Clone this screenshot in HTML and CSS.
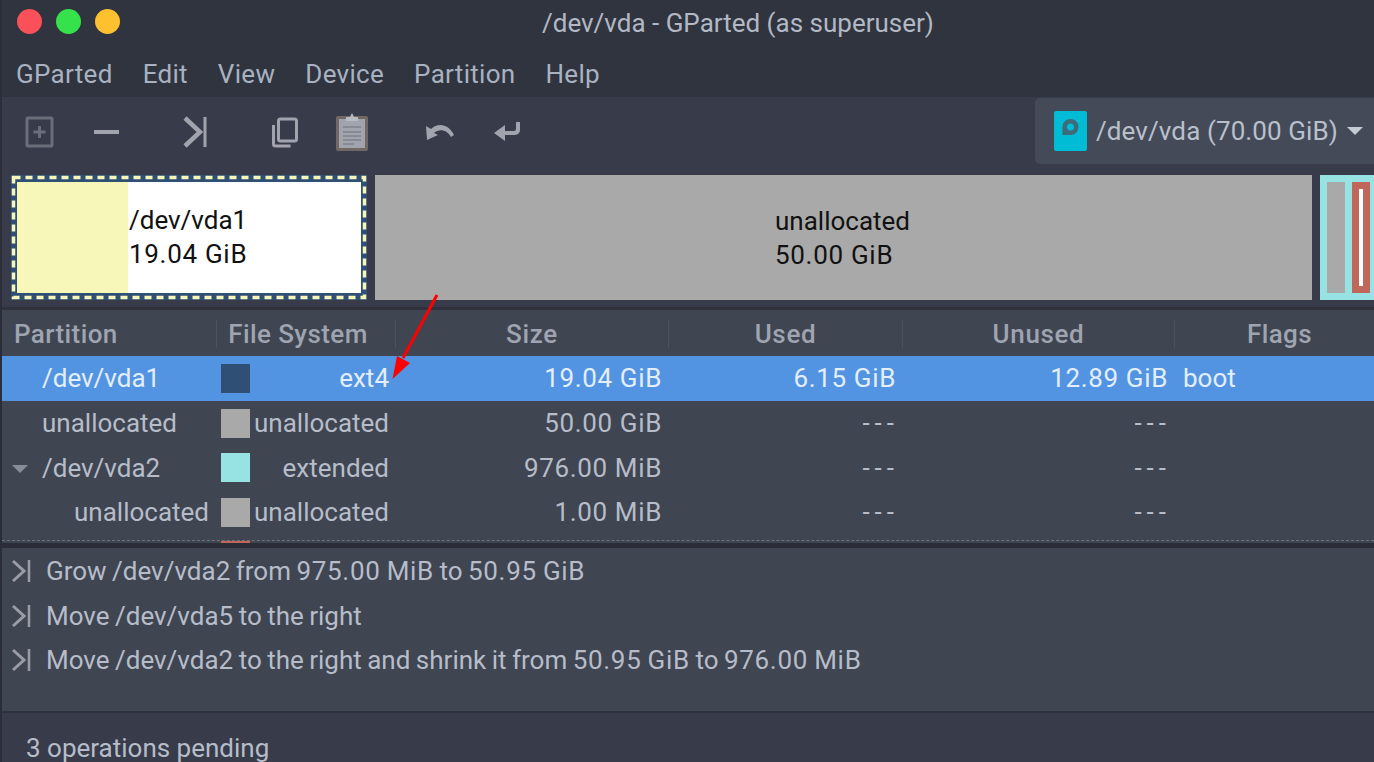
FILE: index.html
```html
<!doctype html>
<html lang="en">
  <head>
    <meta charset="UTF-8" />
    <title>/dev/vda - GParted (as superuser)</title>
    <link rel="stylesheet" href="styles.css">
  </head>
  <body>
    <div id="window">
      <div id="titlebar">
        <div class="lights">
          <span class="light red"></span>
          <span class="light green"></span>
          <span class="light yellow"></span>
        </div>
        <div class="title">/dev/vda - GParted (as superuser)</div>
      </div>

      <div id="menubar">
        <span>GParted</span>
        <span>Edit</span>
        <span>View</span>
        <span>Device</span>
        <span>Partition</span>
        <span>Help</span>
      </div>

      <div id="toolbar">
        <div class="tools">
          <svg class="tool t-new" width="30" height="34" viewBox="0 0 30 34"><rect x="2" y="3" width="25" height="28" rx="1" fill="none" stroke="#6a6e79" stroke-width="3"/><path d="M14.5 11v12M8.5 17h12" stroke="#6a6e79" stroke-width="3"/></svg>
          <svg class="tool t-del" width="28" height="34" viewBox="0 0 28 34"><path d="M1 17h25" stroke="#a1a4ad" stroke-width="4"/></svg>
          <svg class="tool t-apply" width="26" height="34" viewBox="0 0 26 34"><path d="M4 3l15 14L4 31" fill="none" stroke="#a1a4ad" stroke-width="4.5"/><path d="M24 2v30" stroke="#a1a4ad" stroke-width="3"/></svg>
          <svg class="tool t-copy" width="28" height="34" viewBox="0 0 28 34"><rect x="7.5" y="4" width="18" height="22" rx="2" fill="none" stroke="#a1a4ad" stroke-width="3"/><path d="M2.5 10v19a2 2 0 0 0 2 2h15" fill="none" stroke="#a1a4ad" stroke-width="3"/></svg>
          <svg class="tool t-paste" width="34" height="40" viewBox="0 0 34 40"><rect x="1" y="4" width="32" height="35" rx="2" fill="#6f6864"/><rect x="4" y="7" width="26" height="29" fill="#a1a4ad"/><path d="M11 9V5h4l2-4 2 4h4v4z" fill="#b9bbc2"/><path d="M8 15h18M8 20h18M8 24h18M8 28h18M8 32h11" stroke="#80838d" stroke-width="1.5"/></svg>
          <svg class="tool t-undo" width="30" height="18" viewBox="0 0 30 18"><path d="M1 3l1 14 11-5-4-2c5-4 12-4 17 4l3-2C24 1 13-1 6 6z" fill="#a1a4ad"/></svg>
          <svg class="tool t-redo" width="26" height="24" viewBox="0 0 26 24"><path d="M22 2h4v8a5 5 0 0 1-5 5H11v6L0 13 11 5v6h9a2 2 0 0 0 2-2z" fill="#a1a4ad"/></svg>
        </div>
        <div class="device">
          <svg class="device-icon" width="33" height="40" viewBox="0 0 33 40"><rect width="33" height="40" rx="2" fill="#00bcd4"/><circle cx="16.5" cy="16" r="5.75" fill="none" stroke="#3f6a78" stroke-width="4.5"/><path d="M8.5 16v8h8z" fill="#3f6a78"/></svg>
          <span>/dev/vda (70.00 GiB)</span>
          <span class="caret"></span>
        </div>
      </div>

      <div id="diskmap">
        <div class="part selected">
          <div class="used"></div>
          <div class="part-label">/dev/vda1<br /><span class="num">19.04 GiB</span></div>
          <svg class="dashes" width="356" height="125" viewBox="0 0 356 125"><rect x="2.5" y="2.5" width="351" height="120" fill="none" stroke="#f7f7b9" stroke-width="3.5" stroke-dasharray="7 5"/></svg>
        </div>
        <div class="part unalloc">
          <div class="part-label">unallocated<br /><span class="num">50.00 GiB</span></div>
        </div>
        <div class="part extended">
          <div class="inner-gray"></div>
          <div class="inner-red"><div class="inner-white"></div></div>
        </div>
      </div>

      <div id="tree">
        <div class="row head">
          <div class="c c-part">Partition</div>
          <div class="c c-fs">File System</div>
          <div class="c c-size">Size</div>
          <div class="c c-used">Used</div>
          <div class="c c-unused">Unused</div>
          <div class="c c-flags">Flags</div>
        </div>
        <div class="row active">
          <div class="c c-part lvl1">/dev/vda1</div>
          <div class="c c-fs"><span class="swatch" style="background:#2f4f75"></span>ext4</div>
          <div class="c c-size">19.04 GiB</div>
          <div class="c c-used">6.15 GiB</div>
          <div class="c c-unused">12.89 GiB</div>
          <div class="c c-flags">boot</div>
        </div>
        <div class="row">
          <div class="c c-part lvl1">unallocated</div>
          <div class="c c-fs"><span class="swatch" style="background:#a9a9a9"></span>unallocated</div>
          <div class="c c-size">50.00 GiB</div>
          <div class="c c-used nil">---</div>
          <div class="c c-unused nil">---</div>
          <div class="c c-flags"></div>
        </div>
        <div class="row">
          <div class="c c-part lvl1"><span class="expander"></span>/dev/vda2</div>
          <div class="c c-fs"><span class="swatch" style="background:#97e3e3"></span>extended</div>
          <div class="c c-size">976.00 MiB</div>
          <div class="c c-used nil">---</div>
          <div class="c c-unused nil">---</div>
          <div class="c c-flags"></div>
        </div>
        <div class="row">
          <div class="c c-part lvl2">unallocated</div>
          <div class="c c-fs"><span class="swatch" style="background:#a9a9a9"></span>unallocated</div>
          <div class="c c-size">1.00 MiB</div>
          <div class="c c-used nil">---</div>
          <div class="c c-unused nil">---</div>
          <div class="c c-flags"></div>
        </div>
        <div class="row-clip"><span class="swatch-clip"></span></div>
      </div>

      <div id="ops">
        <div class="op"><svg width="20" height="24" viewBox="0 0 20 24"><path d="M2 2l11 10L2 22" fill="none" stroke="#9a9da6" stroke-width="3"/><path d="M18 1v22" stroke="#9a9da6" stroke-width="2.5"/></svg><span>Grow /dev/vda2 from <span class="num">975.00 MiB</span> to <span class="num">50.95 GiB</span></span></div>
        <div class="op"><svg width="20" height="24" viewBox="0 0 20 24"><path d="M2 2l11 10L2 22" fill="none" stroke="#9a9da6" stroke-width="3"/><path d="M18 1v22" stroke="#9a9da6" stroke-width="2.5"/></svg><span>Move /dev/vda5 to the right</span></div>
        <div class="op"><svg width="20" height="24" viewBox="0 0 20 24"><path d="M2 2l11 10L2 22" fill="none" stroke="#9a9da6" stroke-width="3"/><path d="M18 1v22" stroke="#9a9da6" stroke-width="2.5"/></svg><span>Move /dev/vda2 to the right and shrink it from <span class="num">50.95 GiB</span> to <span class="num">976.00 MiB</span></span></div>
      </div>

      <div id="status">3 operations pending</div>
    </div>

    <svg id="arrow" width="60" height="100" viewBox="0 0 60 100"><path d="M47 5L13 68" stroke="#f00" stroke-width="3"/><path d="M2.5 89L20 73 7 66z" fill="#f00"/></svg>
  </body>
</html>
```

FILE: styles.css
```css
* {
  box-sizing: border-box;
}
html,
body {
  margin: 0;
  padding: 0;
  height: 100%;
  overflow: hidden;
}
body {
  font-family: Roboto, sans-serif;
  font-size: 26px;
  color: #d3dae3;
  background-color: #383c4a;
}
#window {
  display: flex;
  flex-direction: column;
  height: 762px;
  border-left: 2px solid #2b2e39;
}
#window > * {
  flex: none;
}
#titlebar {
  height: 50px;
  background-color: #2f343f;
  padding-top: 9px;
  position: relative;
}
.lights {
  display: flex;
  gap: 14px;
  padding-left: 15px;
}
.light {
  width: 25px;
  height: 25px;
  border-radius: 50%;
}
.light.red {
  background-color: #f9505a;
}
.light.green {
  background-color: #35e24b;
}
.light.yellow {
  background-color: #fdc02f;
}
.title {
  position: absolute;
  left: 540px;
  top: 8px;
  color: #b2b8c4;
}
#menubar {
  height: 47px;
  background-color: #2f343f;
  display: flex;
  gap: 30px;
  padding-left: 14px;
  align-items: center;
  letter-spacing: 0.3px;
  color: #a9b2c0;
}
#toolbar {
  height: 78px;
  background-color: #383c4a;
  display: flex;
  justify-content: space-between;
}
.tools {
  display: flex;
  align-items: center;
  padding-left: 23px;
  padding-bottom: 8px;
}
.t-del {
  margin-left: 38px;
}
.t-apply {
  margin-left: 60px;
}
.t-copy {
  margin-left: 64px;
}
.t-paste {
  margin-left: 36px;
}
.t-undo {
  margin-left: 56px;
}
.t-redo {
  margin-left: 39px;
}
.device {
  width: 339px;
  height: 66px;
  margin-top: 1px;
  background-color: #444a58;
  border-radius: 5px 0 0 5px;
  display: flex;
  align-items: center;
  padding-left: 19px;
  gap: 9px;
  letter-spacing: 0.1px;
  color: #b9c0cc;
}
.caret {
  width: 0;
  height: 0;
  border-left: 8px solid transparent;
  border-right: 8px solid transparent;
  border-top: 8px solid #c6cad2;
}
.num {
  letter-spacing: 0.7px;
}
#diskmap {
  height: 135px;
  padding-left: 9px;
  display: flex;
  gap: 8px;
  background-color: #383c4a;
  border-bottom: 3px solid #2f323d;
  color: #111;
}
.part {
  height: 125px;
  position: relative;
  display: flex;
  align-items: center;
}
.part-label {
  line-height: 34px;
}
.part.selected {
  width: 356px;
  background-color: #2f4f75;
  padding: 7px 6px;
  align-items: stretch;
}
.part.selected .used {
  width: 111px;
  background-color: #f7f7b9;
}
.part.selected .part-label {
  flex: 1;
  background-color: #fff;
  padding-top: 21px;
  padding-left: 1px;
}
.dashes {
  position: absolute;
  left: 0;
  top: 0;
}
.part.unalloc {
  width: 937px;
  background-color: #a9a9a9;
  padding-left: 400px;
}
.part.extended {
  flex: 1;
  background-color: #97e3e3;
  padding: 7px 0 7px 7px;
  gap: 7px;
  align-items: stretch;
}
.inner-gray {
  width: 18px;
  background-color: #a9a9a9;
}
.inner-red {
  width: 18px;
  background-color: #c1665a;
  padding: 7px;
}
.inner-white {
  height: 100%;
  background-color: #fff;
}
#tree {
  height: 233px;
  background-color: #404552;
  overflow: hidden;
}
.row {
  display: grid;
  grid-template-columns: 214px 179px 273px 234px 272px 210px;
  height: 44.7px;
  align-items: center;
  color: #b6bdc9;
}
.row.head {
  height: 46px;
  padding-top: 1px;
  font-weight: 500;
  letter-spacing: 0.4px;
  color: #9ea4b0;
}
.row.head .c {
  text-align: center;
  border-left: 1px solid #4d525f;
  height: 28px;
  line-height: 28px;
}
.row.head .c-part {
  text-align: left;
  padding-left: 12px;
  border-left: 0;
}
.row.head .c-fs {
  padding: 0 16px 0 0;
  justify-content: center;
}
.row.head .c-size,
.row.head .c-used,
.row.head .c-unused,
.row.head .c-flags {
  padding: 0;
}
.row.active {
  background-color: #5294e2;
  color: #e4eefa;
}
.c-size,
.c-used,
.c-unused {
  text-align: right;
  padding-right: 6px;
  letter-spacing: 0.65px;
}
.c-used.nil,
.c-unused.nil {
  letter-spacing: 5px;
  padding-right: 3px;
}
.c-fs {
  display: flex;
  align-items: center;
  justify-content: space-between;
  padding: 0 6px 0 5px;
}
.c-flags {
  padding-left: 9px;
}
.lvl1 {
  padding-left: 40px;
  position: relative;
}
.lvl2 {
  padding-left: 72px;
}
.expander {
  position: absolute;
  left: 10px;
  top: 12px;
  width: 0;
  height: 0;
  border-left: 8px solid transparent;
  border-right: 8px solid transparent;
  border-top: 8px solid #888d98;
}
.swatch {
  width: 29px;
  height: 29px;
  flex: none;
}
.row-clip {
  margin-top: 5px;
  height: 3px;
  padding-left: 219px;
  border-top: 1px dashed #6d717c;
}
.swatch-clip {
  display: block;
  width: 29px;
  height: 2px;
  background-color: #c1665a;
}
#ops {
  height: 170px;
  padding-top: 1px;
  background-color: #404552;
  border-top: 5px solid #2b2e39;
  border-bottom: 2px solid #2f323d;
  word-spacing: -1px;
  color: #b6bdc9;
}
.op {
  display: flex;
  align-items: center;
  height: 44.6px;
  gap: 15px;
  padding-left: 9px;
}
#status {
  padding: 20px 0 0 24px;
  color: #b6bdc9;
}
#arrow {
  position: absolute;
  left: 390px;
  top: 290px;
}
```
